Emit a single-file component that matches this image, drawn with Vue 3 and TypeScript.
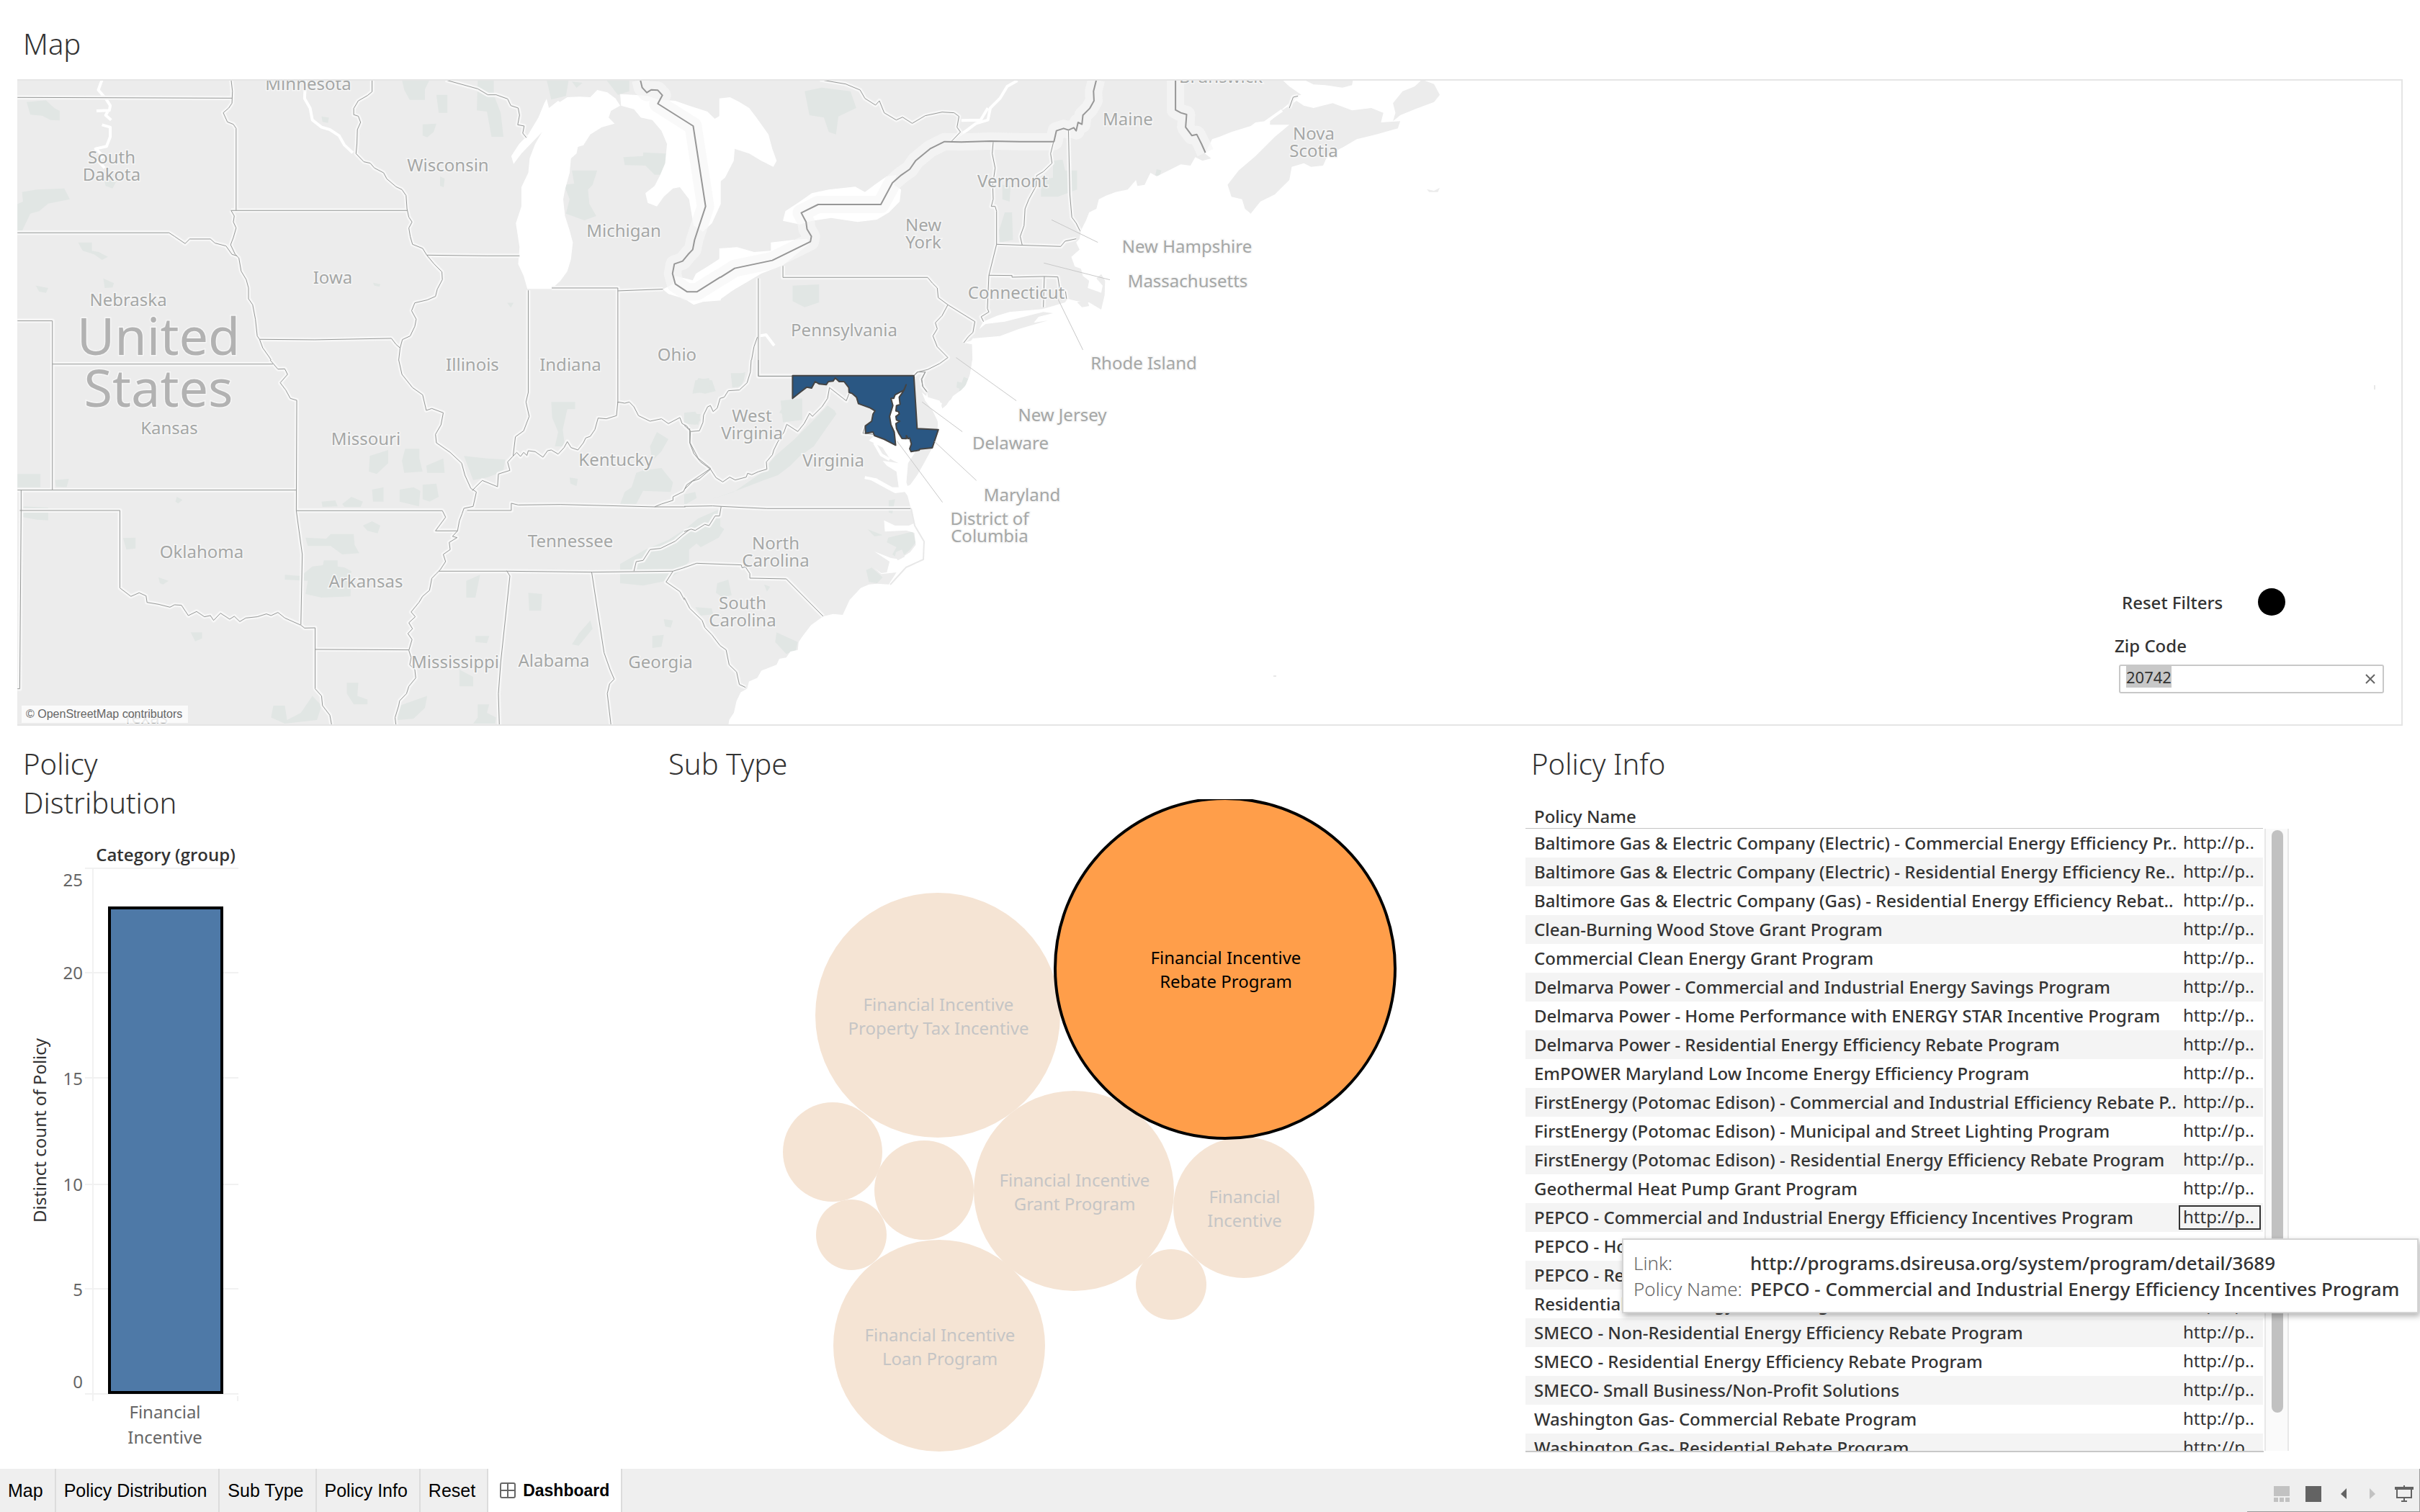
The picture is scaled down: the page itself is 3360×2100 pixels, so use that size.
<script setup lang="ts">
import { onMounted, ref } from 'vue'

interface Tile {
  transform: string
  water: string[]
  land: string[]
  green: string[]
  rivers: string[]
  borders: string[]
  national: string[]
  leaders: string[]
}
interface Label { x: number; y: number; text: string }
interface Bubble { cx: number; cy: number; r: number; lines: string[]; active?: boolean }

const zip = ref('20742')
const zipInput = ref<HTMLInputElement | null>(null)
onMounted(() => {
  zipInput.value?.focus()
  zipInput.value?.select()
})

/* The base map is kept as four survey tiles, each with its own local grid. */
const tiles: Tile[] = [
  {
    transform: 'matrix(.6378 0 0 .3333 0 0)',
    water: [
      'M1300 375 1322 385 1340 410 1350 440 1330 462 1325 490 1338 515 1310 530 1285 560 1270 605 1258 612 1255 640 1243 660 1240 720 1230 790 1226 830 1230 900 1240 960 1247 1010 1243 1080 1235 1130 1220 1170 1201 1204 1148 1204 1140 1150 1128 1100 1131 1030 1123 930 1135 860 1135 780 1150 720 1153 660 1165 600 1180 550 1190 500 1200 460 1215 430 1235 405 1262 403 1285 405Z',
      'M1118 683 1113 650 1130 600 1150 560 1172 490 1185 430 1190 412 1195 450 1215 420 1222 430 1205 480 1190 530 1160 590 1135 640Z',
      'M1350 392 1380 395 1410 400 1432 415 1470 420 1500 440 1540 465 1556 495 1569 480 1569 850 1550 930 1530 965 1510 940 1500 830 1480 780 1465 785 1445 820 1430 860 1410 845 1405 805 1425 775 1437 730 1448 680 1452 600 1440 545 1420 500 1395 490 1380 455 1352 440Z',
      'M1569 1075 1545 1105 1515 1140 1508 1168 1470 1150 1464 1185 1443 1205 1455 1225 1490 1245 1510 1270 1530 1258 1569 1252Z',
    ],
    land: [],
    green: [
      'M58 425 100 418 118 450 130 462 130 502 110 500 92 482 66 478Z',
      'M48 800 80 790 140 785 152 830 105 848 85 880 66 890 48 962 38 962 38 850 50 840Z',
      'M875 333 935 333 925 372 925 416 892 416 880 375Z M950 395H974V470H955Z M1040 333H1075V395L1090 470 1096 570 1070 570 1060 465 1038 460Z',
      'M1190 333H1238L1232 400 1200 415Z M1320 333H1370V380L1345 395Z M1245 340 1268 345 1255 366Z',
      'M920 518 950 515 944 550 930 572 920 565Z M1357 655 1400 650 1400 635 1450 640 1448 728 1425 728 1405 690 1360 688Z',
      'M1245 710 1300 710 1290 770 1280 790 1283 850 1298 900 1272 918 1232 890 1240 830 1228 770 1250 765Z',
      'M170 1010 200 1010 200 1045 215 1050 235 1070 222 1083 205 1060 180 1045Z M225 1160 248 1180 245 1198 228 1200Z M78 1190 105 1200 100 1220 85 1215Z M225 735 255 750 245 785 230 775Z',
      'M958 735 968 745 966 780 958 775Z M700 485 716 490 714 512 702 508Z M812 1178 828 1184 826 1195 815 1190Z M1104 1262H1118L1112 1282Z',
    ],
    rivers: [
      'M222 333 214 375 230 410 240 440 238 460 210 462M236 460 230 480 242 500M222 520 240 530 240 570 232 610 208 620 225 650 212 668 228 700',
      'M665 333 663 410 675 450 680 500 700 530 718 540 738 565 750 605 768 637',
    ],
    borders: [
      'M38 406 505 409',
      'M503 330 506 380 505 430 498 450 486 470 495 508 508 518 514 535 514 877',
      'M503 877H887',
      'M810 330V382L800 398 780 420 770 452 770 478 780 484 785 510 778 540 777 600 775 640 792 674 806 680 815 700 835 720 842 745 862 778 875 790 884 815 886 870 890 905 897 925 890 950 893 985 898 1018 920 1035 929 1063 945 1100 962 1133 963 1165 952 1205 948 1235 930 1250 903 1262 896 1295 906 1330 903 1360 893 1400 876 1415 871 1450 868 1500',
      'M929 1063 1060 1066 1131 1066',
      'M970 333 1040 370 1062 395 1080 395 1105 412 1112 440 1128 450 1131 480 1127 520 1141 525 1138 555 1146 574',
      'M38 970H368L380 985 403 1015 413 996 458 996 468 1013 492 1025 505 1060 516 1066',
      'M503 877 510 900 508 925 514 950 508 990 502 1020 512 1060 520 1075 525 1130 536 1165 541 1200 541 1245 550 1270 556 1330 560 1400 565 1414 572 1450 585 1485 590 1500',
      'M565 1414 685 1416 852 1410 862 1435 871 1450',
      'M38 1337H114V1500',
      'M1150 1210V1500M1201 1200H1345V1500M1345 1212 1443 1205',
    ],
    national: [
      'M1394 333 1398 365 1408 386 1418 374 1432 376 1442 397 1432 432 1509 525 1536 860 1512 1000 1508 1040 1498 1060 1486 1088 1468 1100 1464 1140 1470 1183 1496 1216 1517 1216 1568 1155',
    ],
    leaders: [],
  },
  {
    transform: 'matrix(.6696 0 0 .3333 1000 90)',
    water: [
      'M1165 62 1180 90 1205 125 1190 130 1180 160 1165 185 1170 205 1130 235 1110 240 1100 255 1060 280 1035 300 1020 310 1005 370 1018 390 1000 400 985 385 975 420 955 415 940 430 905 465 892 450 880 500 865 505 862 480 845 520 820 530 800 545 785 560 780 600 765 615 758 650 748 690 745 725 738 740 745 770 728 800 735 840 748 850 752 880 765 900 762 930 790 950 793 920 780 890 790 872 798 900 797 960 790 1020 765 990 740 985 720 975 715 990 690 1005 668 1018 600 1030 575 1045 545 1070 535 1110 520 1150 505 1158 522 1165 523 1230 518 1290 510 1330 500 1370 475 1400 462 1440 455 1400 430 1385 418 1365 425 1400 440 1440 452 1490 450 1520 445 1572H1570V62Z',
      'M-2 140 20 135 40 155 60 180 75 220 100 290 108 350 117 400 110 425 85 400 60 370 30 350 28 400 10 470 -2 490Z',
      'M130 650 135 610 165 570 190 535 225 520 280 508 300 530 320 500 345 465 365 460 360 500 375 520 372 570 350 615 325 645 285 655 230 638 190 650 165 665Z',
      'M-2 765 35 760 70 780 105 775 105 740 150 730 180 725 185 745 130 835 85 870 60 900 30 935 -2 980Z',
    ],
    land: [
      'M524 1140 535 1105 550 1080 590 1070 640 1045 670 1030 690 1035 660 1050 650 1075 680 1065 620 1100 580 1130Z',
      'M1100 620 1088 600 1082 560 1060 550 1052 500 1075 440 1110 380 1150 300 1180 250 1140 250 1140 235 1165 190 1195 150 1210 170 1230 180 1270 160 1310 190 1350 180 1375 200 1370 240 1410 235 1405 265 1360 290 1320 310 1290 345 1260 375 1250 420 1225 425 1210 410 1185 425 1180 480 1150 540 1120 570 1108 600Z',
      'M1395 235 1400 200 1395 160 1415 110 1440 90 1455 62 1480 80 1492 125 1480 155 1440 185 1410 210Z',
      'M1210 62H1312L1310 85 1290 95 1255 85 1230 82Z',
      'M740 990 760 975 765 1005 750 1010Z M1465 518 1480 525 1492 512 1488 530 1470 530Z',
    ],
    green: [
      'M175 110 210 95 270 110 282 180 245 215 240 290 225 280 215 220 185 210Z',
      'M150 920 205 915 205 990 175 1010 150 985Z M590 615 605 615 607 730 580 740 578 690Z',
      'M690 400 710 395 715 440 740 440 740 520 700 550 665 550 665 480 690 470Z M585 500 602 505 600 570 585 560Z',
      'M505 1300 515 1310 505 1370 495 1360Z M905 435 915 440 910 465 902 460Z M22 1285 50 1285 45 1340 25 1345Z M125 1400 170 1390 170 1480 130 1490Z',
    ],
    rivers: [
      'M616 66 595 90 580 140 560 180 555 230 530 245 510 275 490 300M555 180 540 230 500 232M1130 240 1165 190',
      'M80 1130 95 1125 112 1170',
    ],
    borders: [
      'M207 62 260 80 290 105 300 140 322 168 330 150 340 200 365 230 378 218 398 244 425 212 460 197 485 200 495 215 491 260 498 280 480 318',
      'M566 322 564 370 570 430 565 500 566 560 562 590 570 590 573 610 573 748 557 878 554 1015 557 1030 541 1050 546 1070',
      'M691 322 685 370 688 410 670 445 656 462 655 505 640 560 632 600 630 670 622 715 626 750',
      'M722 275 725 540 729 635 738 660 746 692',
      'M573 748 706 757 715 735 738 725',
      'M557 877 605 878 605 885 672 882 700 884 704 935 716 945 718 975M672 882 670 1010',
      'M130 838V886H430L440 910 450 930 452 970 472 1000 528 1070 524 1115 515 1132 505 1158',
      'M472 1000 460 1045 446 1075 450 1100 441 1130 450 1175 472 1220 455 1245 430 1270 410 1280 402 1295M425 1280 417 1310 420 1340 429 1363',
      'M79 890V1298H150M77 1135 70 1175 65 1230',
      'M1180 180 1188 135 1198 130',
    ],
    national: [
      'M0 886 30 848 108 815 187 737 189 715 180 685 178 655 168 617 203 582 333 582 357 492 375 460 393 435 405 400 435 350 465 320 500 322 560 318 620 320 692 320 697 275 712 265 722 272 733 262 738 275 742 240 750 248 752 210 766 182 775 150 774 110 780 62',
      'M944 62V188L955 200 967 207 965 260 978 295 988 290 998 330 1006 366',
    ],
    leaders: ['M687 646 783 740', 'M671 826 808 896', 'M700 975 752 1188', 'M489 1220 614 1400'],
  },
  {
    transform: 'matrix(.6378 0 0 .3333 0 500)',
    water: [],
    land: [],
    green: [
      'M38 475H88V530H38Z M120 500 150 495 145 530 122 528Z M50 610 105 615 105 668 80 665 50 655Z M268 742 295 740 295 785 275 790Z',
      'M665 740 710 745 720 725 770 725 772 770 782 805 745 810 720 775 670 775Z M705 835 735 835 735 860 750 865 765 880 763 985 700 990 665 975 670 920 620 915 620 895 655 900 680 860 703 855Z',
      'M805 400 845 375 845 430 820 475 803 465Z M882 370H913V410L920 465 880 470 875 420Z M928 440 965 410 968 470 930 470Z M870 540 900 530 915 545 912 610 870 590Z M920 520 950 515 955 570 935 590 920 580Z',
      'M1010 400 1060 410 1100 415 1095 465 1060 490 1030 500 1020 450Z M1400 460 1440 450 1465 510 1460 550 1400 545 1385 600 1350 600 1360 550 1375 530 1385 470Z M1430 300 1455 330 1440 380 1420 420 1415 360Z',
      'M1568 620 1520 660 1495 700 1455 750 1405 790 1350 850 1350 930 1400 940 1450 920 1480 880 1500 840 1500 790 1545 720 1568 690Z',
      'M1150 970 1180 975 1178 1045 1152 1045Z M1015 920 1045 895 1035 990 1015 990Z M1285 1085 1290 1120 1260 1190 1245 1185 1260 1140Z M1000 1290 1030 1320 1030 1360 1000 1360Z',
      'M1200 175H1252V205H1235L1225 290 1230 360 1208 360 1215 300 1202 240Z M1520 75 1550 85 1558 130 1535 140 1508 130Z M1490 225 1525 225 1520 270 1495 260Z M700 590 730 585 735 610 702 612Z M745 600 765 570 790 590 785 612 750 612Z M810 540 835 530 835 590 812 590Z',
      'M755 1345 780 1345 778 1400 800 1415 800 1435 770 1435 755 1390Z M595 1440 620 1440 625 1500 655 1470 680 1400 700 1440 690 1500 620 1515 590 1490Z M865 1500 870 1440 930 1400 925 1450 900 1495Z M1040 1435 1065 1435 1060 1470 1080 1490 1078 1515 1030 1515 1040 1490Z',
      'M790 690 810 672 828 690 822 722 800 712Z M415 1135 440 1135 440 1160 425 1172Z M345 905 367 920 355 935 348 930Z M385 570 397 583 388 598 382 590Z M1240 490 1258 495 1255 525 1242 515Z M1035 1150 1065 1150 1060 1180 1035 1175Z M1420 1150 1445 1145 1440 1195 1420 1200Z M1445 1080 1465 1085 1460 1115 1448 1110Z',
    ],
    rivers: [],
    borders: [
      'M114 0V542M114 17H594',
      'M588 0 605 38 620 37 626 60 610 95 622 125 632 160 646 168 645 628 658 810 655 1103',
      'M38 542H645M46 542V627L43 1370H38',
      'M43 627H261V950L285 985 303 970 318 983 320 1010 345 1018 370 1030 380 1020 395 1022 410 1065 428 1048 445 1070 458 1065 465 1085 480 1055 500 1080 510 1068 522 1090 535 1075 560 1070 580 1058 590 1065 605 1052 620 1075 655 1105 663 1117 686 1116 686 1370 700 1400 702 1440 718 1480 722 1521',
      'M645 628H963L970 655 948 712H996M686 1206 890 1208',
      'M868 0 875 60 898 115 920 145 928 210 940 202 965 220 960 270 948 310 950 345 980 385 1005 430 1012 480 1025 535 1037 550 1030 610 1010 618 1006 640 1000 670 996 712 985 735 995 740 978 760 980 790 965 810 970 840 958 875 950 890 940 910 935 960 920 985 912 1010 895 1050 904 1070 890 1095 898 1120 888 1140 897 1165 890 1210 895 1240 892 1270 903 1290 905 1325 890 1360 885 1390 870 1420 868 1440 860 1490 862 1521',
      'M1150 0V135L1145 175 1152 235 1140 295 1122 320 1117 400 1105 425 1110 460 1085 475 1083 528 1050 502 1035 530 1028 545',
      'M1117 400 1125 385 1133 402 1140 385 1147 398 1150 378 1165 382 1182 405 1192 378 1200 375 1215 392 1228 365 1235 340 1243 365 1258 375 1270 345 1275 325 1285 318 1295 290 1302 242 1320 245 1342 232 1345 175 1360 180 1370 175 1380 195 1390 232 1415 255 1440 245 1455 265 1480 240 1485 265 1495 275 1503 298',
      'M1345 0V180M1503 298 1502 345 1520 410 1547 452M1547 452 1495 520 1488 548 1465 570 1465 585 1440 600 1425 612',
      'M1017 627H1113V597L1128 604 1220 602 1425 612H1492M955 880H1105L1290 884 1465 880 1490 865',
      'M1500 708 1485 730 1470 755 1438 785 1415 790 1400 835 1385 840 1380 880',
      'M1103 878 1110 900 1090 1260 1085 1390 1087 1521M1288 884 1315 1220 1328 1290 1337 1330 1327 1350 1322 1390 1330 1521M1465 880 1450 925 1480 965 1490 1000',
    ],
    national: [],
    leaders: [],
  },
  {
    transform: 'matrix(.3827 0 0 .3333 950 500)',
    water: [
      'M1045 0 1040 40 1030 95 1005 125 975 150 960 180 930 208 935 180 885 160 880 130 878 160 910 200 920 260 922 290 900 366 870 430 845 480 820 520 810 525 806 510 812 430 840 380 818 370 824 350 818 325 806 328 790 327 778 305 782 255 778 190 805 103 765 145 750 160 757 190 745 235 750 270 767 355 690 315 670 335 720 365 745 410 760 420 778 430 720 420 690 360 720 420 735 440 770 465 778 530 755 530 700 495 655 487 740 540 765 555 800 550 810 565 822 617 834 680 815 690 765 690 725 668 728 715 805 710 835 720 840 770 820 800 780 830 750 825 690 798 745 840 735 885 715 888 690 868 715 892 770 885 742 935 700 932 670 935 640 950 600 1000 575 1062 540 1058 504 1068 460 1105 430 1150 415 1175 412 1208 385 1215 370 1240 345 1245 335 1270 280 1295 265 1325 235 1340 228 1370 205 1385 190 1420 180 1470 163 1500 160 1524H1570V0Z',
    ],
    land: ['M768 800 790 790 800 820 775 835 765 820Z'],
    green: [
      'M170 70 222 50 215 90 180 115Z M40 85 90 75 95 130 30 140Z M0 220 40 215 60 250 40 270 0 265Z M365 180 410 160 410 220 400 240 345 220Z',
      'M545 210 552 225 500 310 470 360 420 400 385 440 340 480 290 500 200 540 100 580 180 550 280 470 330 400 400 330 470 250 520 190Z M0 560 40 550 45 575 0 605Z',
      'M50 700 110 675 145 705 125 740 60 780 40 760Z M120 930 160 915 172 980 140 990 115 970Z M290 935 312 945 300 965Z M335 1135 412 1175 405 1210 370 1225 330 1175Z M660 875 680 865 720 905 700 930 670 925Z M740 740 830 715 840 760 820 790 780 830 755 810 770 780 735 760Z',
      'M742 585 765 580 755 640 742 635Z M40 1030 100 1035 105 1060 60 1065Z M990 90 1010 95 1000 120 988 115Z M665 705 720 730 690 735Z',
    ],
    rivers: ['M690 345 715 395 745 415M655 490 700 500'],
    borders: [
      'M243 0 240 50 228 95 200 125 160 128 145 155 130 160 120 200 105 215 95 190 85 195 70 230 68 260 55 295 25 298 0 272',
      'M20 285V345L35 390 60 425 95 455 115 490 140 508 165 488 185 500 225 488 230 472 245 478 270 465 300 455 298 425 320 395 325 375 340 340 362 300 372 268 412 298 435 265 455 222 465 235 500 195 520 160 527 115 588 170 598 140',
      'M95 455 55 495 30 505 0 540M0 610 103 608 134 610 300 619 822 619',
      'M134 610 128 650 112 650 90 690 75 685 40 710 25 705 0 715',
      'M0 865 45 847 207 854 210 866 222 862 238 890 238 909 370 912 504 1068',
      'M0 990 20 1035 65 1085 75 1115 100 1145 130 1190 152 1208 163 1270 190 1300 200 1352 222 1364',
      'M833 65 845 50 875 50M875 50 862 80 865 110 880 133',
      'M682 202 694 212 685 225M657 275 648 305 685 310',
      'M269 0V67H393',
    ],
    national: [],
    leaders: ['M863 175 1009 299', 'M908 340 1060 502', 'M772 338 937 593'],
  },
]

const maryland =
  'M393 65H833L845 286 922 290 900 366 855 371 852 376 823 382 818 370 824 350 818 325 812 328 806 315 806 328 790 327 778 305 770 285 768 265 782 255 770 250 768 235 780 225 778 215 768 212 770 190 783 185 780 155 795 130 805 103 798 125 765 145 760 160 750 160 757 190 745 235 750 270 762 300 767 355 725 330 690 315 685 300 658 305 657 275 680 255 685 225 692 212 675 200 632 182 625 155 610 140 598 135 597 115 580 90 562 90 548 75 540 88 523 90 515 103 490 100 475 90 462 117 445 113 420 135 393 160Z'

const labels: Label[] = [
  { x: 428, y: 125, text: 'Minnesota' }, { x: 155, y: 227, text: 'South' }, { x: 155, y: 251, text: 'Dakota' },
  { x: 622, y: 238, text: 'Wisconsin' }, { x: 866, y: 329, text: 'Michigan' }, { x: 462, y: 394, text: 'Iowa' },
  { x: 178, y: 425, text: 'Nebraska' }, { x: 656, y: 515, text: 'Illinois' }, { x: 792, y: 515, text: 'Indiana' },
  { x: 940, y: 501, text: 'Ohio' }, { x: 235, y: 603, text: 'Kansas' }, { x: 508, y: 618, text: 'Missouri' },
  { x: 855, y: 647, text: 'Kentucky' }, { x: 280, y: 775, text: 'Oklahoma' }, { x: 508, y: 816, text: 'Arkansas' },
  { x: 792, y: 760, text: 'Tennessee' }, { x: 632, y: 928, text: 'Mississippi' }, { x: 769, y: 926, text: 'Alabama' },
  { x: 917, y: 928, text: 'Georgia' }, { x: 202, y: 1005, text: 'Texas' }, { x: 1566, y: 174, text: 'Maine' },
  { x: 1695, y: 115, text: 'Brunswick' }, { x: 1824, y: 194, text: 'Nova' }, { x: 1824, y: 218, text: 'Scotia' },
  { x: 1406, y: 260, text: 'Vermont' }, { x: 1282, y: 321, text: 'New' }, { x: 1282, y: 345, text: 'York' },
  { x: 1648, y: 351, text: 'New Hampshire' }, { x: 1649, y: 399, text: 'Massachusetts' }, { x: 1411, y: 415, text: 'Connecticut' },
  { x: 1172, y: 467, text: 'Pennsylvania' }, { x: 1588, y: 513, text: 'Rhode Island' }, { x: 1044, y: 586, text: 'West' },
  { x: 1044, y: 610, text: 'Virginia' }, { x: 1157, y: 648, text: 'Virginia' }, { x: 1475, y: 585, text: 'New Jersey' },
  { x: 1403, y: 624, text: 'Delaware' }, { x: 1419, y: 696, text: 'Maryland' }, { x: 1374, y: 729, text: 'District of' },
  { x: 1374, y: 753, text: 'Columbia' }, { x: 1077, y: 763, text: 'North' }, { x: 1077, y: 787, text: 'Carolina' },
  { x: 1031, y: 846, text: 'South' }, { x: 1031, y: 870, text: 'Carolina' },
]

const bubbles: Bubble[] = [
  { cx: 1302, cy: 1410, r: 170, lines: ['Financial Incentive', 'Property Tax Incentive'] },
  { cx: 1156, cy: 1600, r: 69, lines: [] },
  { cx: 1283, cy: 1653, r: 69, lines: [] },
  { cx: 1182, cy: 1715, r: 49, lines: [] },
  { cx: 1491, cy: 1654, r: 139, lines: ['Financial Incentive', 'Grant Program'] },
  { cx: 1727, cy: 1677, r: 98, lines: ['Financial', 'Incentive'] },
  { cx: 1626, cy: 1784, r: 49, lines: [] },
  { cx: 1304, cy: 1869, r: 147, lines: ['Financial Incentive', 'Loan Program'] },
  { cx: 1701, cy: 1345, r: 236, lines: ['Financial Incentive', 'Rebate Program'], active: true },
]

const ticks = [
  { v: 25, y: 1205, ty: 1230 }, { v: 20, y: 1350, ty: 1359 }, { v: 15, y: 1496, ty: 1506 },
  { v: 10, y: 1644, ty: 1653 }, { v: 5, y: 1789, ty: 1799 }, { v: 0, y: 1935, ty: 1927 },
]

const policies: string[] = [
  'Baltimore Gas & Electric Company (Electric) - Commercial Energy Efficiency Pr..',
  'Baltimore Gas & Electric Company (Electric) - Residential Energy Efficiency Re..',
  'Baltimore Gas & Electric Company (Gas) - Residential Energy Efficiency Rebat..',
  'Clean-Burning Wood Stove Grant Program',
  'Commercial Clean Energy Grant Program',
  'Delmarva Power - Commercial and Industrial Energy Savings Program',
  'Delmarva Power - Home Performance with ENERGY STAR Incentive Program',
  'Delmarva Power - Residential Energy Efficiency Rebate Program',
  'EmPOWER Maryland Low Income Energy Efficiency Program',
  'FirstEnergy (Potomac Edison) - Commercial and Industrial Efficiency Rebate P..',
  'FirstEnergy (Potomac Edison) - Municipal and Street Lighting Program',
  'FirstEnergy (Potomac Edison) - Residential Energy Efficiency Rebate Program',
  'Geothermal Heat Pump Grant Program',
  'PEPCO - Commercial and Industrial Energy Efficiency Incentives Program',
  'PEPCO - Home Performance with ENERGY STAR Program',
  'PEPCO - Residential Energy Efficiency Rebate Program',
  'Residential Wind Energy Grant Program',
  'SMECO - Non-Residential Energy Efficiency Rebate Program',
  'SMECO - Residential Energy Efficiency Rebate Program',
  'SMECO- Small Business/Non-Profit Solutions',
  'Washington Gas- Commercial Rebate Program',
  'Washington Gas- Residential Rebate Program',
]
const selected = 13

const tabs = ['Map', 'Policy Distribution', 'Sub Type', 'Policy Info', 'Reset']
</script>

<template>
  <div class="workbook">
    <main class="dashboard">
      <h2 class="title">Map</h2>
      <section class="map">
        <svg class="map-canvas" viewBox="24 112 3310 894" role="img" aria-label="Map of policies by state">
          <rect class="land" x="24" y="110" width="2025" height="896" />
          <rect class="sea" x="1540" y="600" width="510" height="410" />
          <g v-for="(t, i) in tiles" :key="'g' + i" :transform="t.transform">
            <path v-for="(d, j) in t.green" :key="j" class="green" :d="d" />
          </g>
          <g v-for="(t, i) in tiles" :key="'w' + i" :transform="t.transform">
            <path v-for="(d, j) in t.water" :key="j" class="sea" :d="d" />
            <path v-for="(d, j) in t.land" :key="'l' + j" class="land" :d="d" />
            <path v-for="(d, j) in t.rivers" :key="'r' + j" class="river" :d="d" />
          </g>
          <g v-for="(t, i) in tiles" :key="'c' + i" :transform="t.transform">
            <path v-for="(d, j) in t.borders" :key="j" class="casing" :d="d" />
            <path v-for="(d, j) in t.national" :key="'n' + j" class="casing wide" :d="d" />
          </g>
          <g v-for="(t, i) in tiles" :key="'b' + i" :transform="t.transform">
            <path v-for="(d, j) in t.borders" :key="j" class="border" :d="d" />
            <path v-for="(d, j) in t.national" :key="'n' + j" class="national" :d="d" />
          </g>
          <path class="banks" d="M1265 706 1270 730 1283 752 1282 777 1258 788 1236 812" />
          <path class="banks" d="M3297 535V541M1768 939H1772" />
          <path class="maryland" :transform="tiles[3].transform" :d="maryland" />
          <g v-for="(t, i) in tiles" :key="'k' + i" :transform="t.transform">
            <path v-for="(d, j) in t.leaders" :key="j" class="leader" :d="d" />
          </g>
          <g class="place">
            <text v-for="(l, i) in labels" :key="i" :x="l.x" :y="l.y">{{ l.text }}</text>
          </g>
          <g class="country">
            <text x="220" y="493">United</text>
            <text x="220" y="565">States</text>
          </g>
        </svg>
        <a class="credit" href="#">© OpenStreetMap contributors</a>
        <form class="filters" @submit.prevent>
          <div class="reset">
            <span id="reset-label">Reset Filters</span>
            <button type="button" class="dot" aria-labelledby="reset-label"></button>
          </div>
          <label for="zip">Zip Code</label>
          <div class="zip-box">
            <input id="zip" ref="zipInput" v-model="zip" type="text" />
            <button type="button" class="clear" aria-label="Clear">
              <svg width="14" height="14" viewBox="0 0 14 14"><path d="M1 1 13 13M13 1 1 13" /></svg>
            </button>
          </div>
        </form>
      </section>

      <div class="panels">
        <section>
          <h2 class="title narrow">Policy Distribution</h2>
          <svg class="chart" viewBox="24 1141 896 895" role="img" aria-label="Distinct count of Policy by category">
            <text class="head" x="230" y="1195">Category (group)</text>
            <g v-for="t in ticks" :key="t.v">
              <rect class="rule" x="118" :y="t.y - 1" width="213" height="2" />
              <text class="tick" x="115" :y="t.ty">{{ t.v }}</text>
            </g>
            <path class="axis" d="M129 1205V1945M330 1938V1945" />
            <rect class="bar" x="152" y="1260" width="156" height="673" />
            <text class="axis-title" transform="translate(64 1569) rotate(-90)">Distinct count of Policy</text>
            <text class="cat" x="229" y="1969">Financial</text>
            <text class="cat" x="229" y="2004">Incentive</text>
          </svg>
        </section>

        <section>
          <h2 class="title">Sub Type</h2>
          <svg class="bubbles" viewBox="920 1110 1198 926" role="img" aria-label="Policies by sub type">
            <g v-for="(b, i) in bubbles" :key="i" :class="['bubble', { active: b.active }]">
              <circle :cx="b.cx" :cy="b.cy" :r="b.r" />
              <text v-for="(line, j) in b.lines" :key="j" :x="b.cx + 1" :y="b.cy - 6 + j * 33">{{ line }}</text>
            </g>
          </svg>
        </section>

        <section class="info">
          <h2 class="title">Policy Info</h2>
          <div class="grid">
            <div class="viewport">
              <table>
                <thead>
                  <tr><th scope="col">Policy Name</th><th class="link"></th></tr>
                </thead>
                <tbody>
                  <tr v-for="(p, i) in policies" :key="i">
                    <td>{{ p }}</td>
                    <td class="link"><a href="#" :class="{ on: i === selected }">http://p..</a></td>
                  </tr>
                </tbody>
              </table>
            </div>
            <div class="track"><div class="thumb"></div></div>
          </div>
          <dl class="tooltip">
            <dt>Link:</dt>
            <dd>http://programs.dsireusa.org/system/program/detail/3689</dd>
            <dt>Policy Name:</dt>
            <dd>PEPCO - Commercial and Industrial Energy Efficiency Incentives Program</dd>
          </dl>
        </section>
      </div>
    </main>

    <nav class="tabs">
      <button v-for="t in tabs" :key="t" type="button">{{ t }}</button>
      <button type="button" class="current">
        <svg width="22" height="22" viewBox="0 0 22 22">
          <rect x="1" y="1" width="20" height="20" rx="2" /><path d="M11 1V21M1 11H21" />
        </svg>
        Dashboard
      </button>
      <div class="tools">
        <button type="button" aria-label="Show filmstrip">
          <svg width="22" height="24" viewBox="0 0 22 24"><path class="pale" d="M0 1H22V15H0ZM0 17H6V23H0ZM8 17H14V23H8ZM16 17H22V23H16Z" /></svg>
        </button>
        <button type="button" aria-label="Show tabs">
          <svg width="22" height="24" viewBox="0 0 22 24"><path d="M0 1H22V23H0Z" /></svg>
        </button>
        <button type="button" class="arrow" aria-label="Previous">
          <svg width="8" height="24" viewBox="0 0 8 24"><path d="M8 4V19L0 12Z" /></svg>
        </button>
        <button type="button" class="arrow" aria-label="Next">
          <svg width="8" height="24" viewBox="0 0 8 24"><path class="pale" d="M0 4V19L8 12Z" /></svg>
        </button>
        <button type="button" aria-label="Presentation mode">
          <svg width="26" height="24" viewBox="0 0 26 24"><path d="M12 0H14V2H26V6H24V18H14V21H17V23H9V21H12V18H2V6H0V2H12ZM4 6V16H22V6Z" fill-rule="evenodd" /></svg>
        </button>
      </div>
    </nav>
  </div>
</template>

<style>
body {
  margin: 0;
  background: #fff;
}
</style>

<style scoped>
.workbook {
  display: flex;
  flex-direction: column;
  min-height: 100vh;
  font-family: "Noto Sans", "Open Sans", sans-serif;
  font-size: 24px;
  color: #333;
}
.workbook * {
  box-sizing: border-box;
}
.dashboard {
  flex: 1;
  padding: 34px 0 0 24px;
}
.title {
  margin: 0 0 0 8px;
  font-size: 40px;
  line-height: 54px;
  font-weight: 300;
}
.narrow {
  width: 280px;
}
button {
  border: 0;
  padding: 0;
  background: none;
  font: inherit;
  color: inherit;
}

/* Map */
.map {
  position: relative;
  margin: 22px 24px 0 0;
  border: solid #e5e5e5;
  border-width: 2px 2px 2px 0;
}
.map-canvas {
  display: block;
  width: 100%;
}
.map-canvas path {
  vector-effect: non-scaling-stroke;
  stroke-linejoin: round;
}
.land { fill: #ececec; }
.sea { fill: #fff; }
.green { fill: #e1e6e4; }
.river { fill: none; stroke: #fff; stroke-width: 4; }
.casing { fill: none; stroke: #f7f7f7; stroke-width: 6; }
.casing.wide { stroke-width: 24; stroke-opacity: .7; }
.border { fill: none; stroke: #979998; stroke-width: 1; }
.national { fill: none; stroke: #979797; stroke-width: 2; }
.leader { fill: none; stroke: #c8c8c8; stroke-width: 1; }
.banks { fill: none; stroke: #e8e8e8; stroke-width: 2; }
.maryland { fill: #2a5783; stroke: #444; stroke-width: 2; }
.place text,
.country text {
  text-anchor: middle;
  paint-order: stroke;
  stroke: #f6f6f6;
  stroke-width: 3;
  fill: #a5a7a6;
}
.country text {
  font-size: 72px;
  fill: #b2b2b2;
}
.credit {
  position: absolute;
  left: 6px;
  bottom: 2px;
  padding: 0 8px 0 6px;
  background: rgba(255, 255, 255, .75);
  font: 16px/24px "Liberation Sans", sans-serif;
  color: #666;
  text-decoration: none;
}
.filters {
  position: absolute;
  right: 24px;
  bottom: 43px;
  width: 374px;
  font-weight: 500;
}
.reset {
  display: flex;
  align-items: center;
  gap: 49px;
  height: 38px;
  padding-left: 10px;
  margin-bottom: 24px;
}
.dot {
  width: 38px;
  height: 38px;
  border-radius: 50%;
  background: #000;
}
.filters label {
  display: block;
  line-height: 36px;
}
.zip-box {
  display: flex;
  align-items: center;
  height: 40px;
  margin: 8px 0 0 6px;
  border: 2px solid #c8c8c8;
  border-radius: 3px;
}
.zip-box input {
  flex: 1;
  min-width: 0;
  height: 36px;
  border: 0;
  outline: 0;
  padding: 0 8px 6px;
  background: none;
  font: 22px/26px "Noto Sans", sans-serif;
  color: #333;
}
.zip-box input::selection {
  background: #c8c8c8;
  color: #333;
}
.clear {
  display: flex;
  padding-right: 10px;
}
.clear path {
  stroke: #666;
  stroke-width: 2;
}

/* Lower panels */
.panels {
  display: grid;
  grid-template-columns: 896fr 1198fr 1242fr;
  padding-top: 26px;
}
.chart,
.bubbles {
  display: block;
  width: 100%;
}
.bubbles {
  margin-top: 22px;
}
.chart text { text-anchor: middle; fill: #333; }
.chart .head { font-family: "Open Sans", sans-serif; font-weight: 600; }
.chart .tick { text-anchor: end; fill: #666; }
.chart .cat { fill: #666; }
.rule { fill: #f1f1f1; }
.axis { fill: none; stroke: #f1f1f1; stroke-width: 2; }
.bar { fill: #4e79a7; stroke: #000; stroke-width: 4; }
.bubble circle { fill: #f5e4d4; }
.bubble text { text-anchor: middle; fill: #c5c5c5; }
.bubble.active circle { fill: #ff9e4a; stroke: #000; stroke-width: 4; }
.bubble.active text { fill: #000; }

.info {
  position: relative;
}
.grid {
  position: relative;
  display: flex;
}
.viewport {
  width: 1025px;
  height: 929px;
  overflow: hidden;
  border-bottom: 2px solid #c8c8c8;
}
table {
  width: 1024px;
  border-collapse: collapse;
  table-layout: fixed;
}
th {
  height: 63px;
  padding: 0 0 0 12px;
  box-shadow: inset 0 -1px #c4c4c4;
  vertical-align: bottom;
  text-align: left;
  font-weight: 500;
  line-height: 34px;
}
td {
  height: 40px;
  padding: 0 0 0 12px;
  line-height: 34px;
  font-weight: 500;
  white-space: nowrap;
}
tbody tr:nth-child(even) {
  background: #f4f4f4;
}
th.link,
td.link {
  width: 117px;
  padding: 0;
  font-weight: 400;
}
.link a {
  display: block;
  width: 114px;
  height: 34px;
  border: 2px solid transparent;
  padding-left: 4px;
  line-height: 28px;
  color: inherit;
  text-decoration: none;
}
.link a.on {
  border-color: #333;
}
.track {
  width: 34px;
  margin: 63px 0 2px 1px;
  padding: 2px 0 0 8px;
  border: solid #e8e8e8;
  border-width: 0 2px;
  background: #fafafa;
}
.thumb {
  width: 16px;
  height: 809px;
  border-radius: 8px;
  background: #c1c1c1;
}
.tooltip {
  position: absolute;
  top: 686px;
  left: 134px;
  right: 2px;
  display: grid;
  grid-template-columns: 162px 1fr;
  margin: 0;
  padding: 14px 0 14px 14px;
  border: 2px solid #d4d4d4;
  background: #fff;
  box-shadow: 2px 4px 8px rgba(0, 0, 0, .3);
  font-size: 26px;
  line-height: 36px;
  white-space: nowrap;
}
.tooltip dt {
  font-weight: 300;
  color: #666;
}
.tooltip dd {
  margin: 0;
  font-weight: 500;
}

/* Sheet tabs */
.tabs {
  display: flex;
  height: 60px;
  background: #efefef;
  font: 25px "Liberation Sans", sans-serif;
  color: #000;
}
.tabs > button {
  padding: 0 16px 0 11px;
  border-right: 2px solid #dcdcdc;
}
.tabs > .current {
  display: flex;
  align-items: center;
  gap: 10px;
  padding: 0 16px;
  background: #fff;
  font-size: 23px;
  font-weight: 700;
}
.current svg {
  fill: none;
  stroke: #666;
  stroke-width: 2;
}
.tools {
  display: flex;
  justify-content: flex-end;
  align-items: center;
  gap: 22px;
  width: 240px;
  margin-left: auto;
  padding: 10px 8px 0 0;
  border: solid #999;
  border-width: 0 1px 1px 0;
}
.tools button {
  display: flex;
}
.tools .arrow {
  padding: 0 5px;
}
.tools path {
  fill: #636363;
}
.tools .pale {
  fill: #c2c2c2;
}
</style>
